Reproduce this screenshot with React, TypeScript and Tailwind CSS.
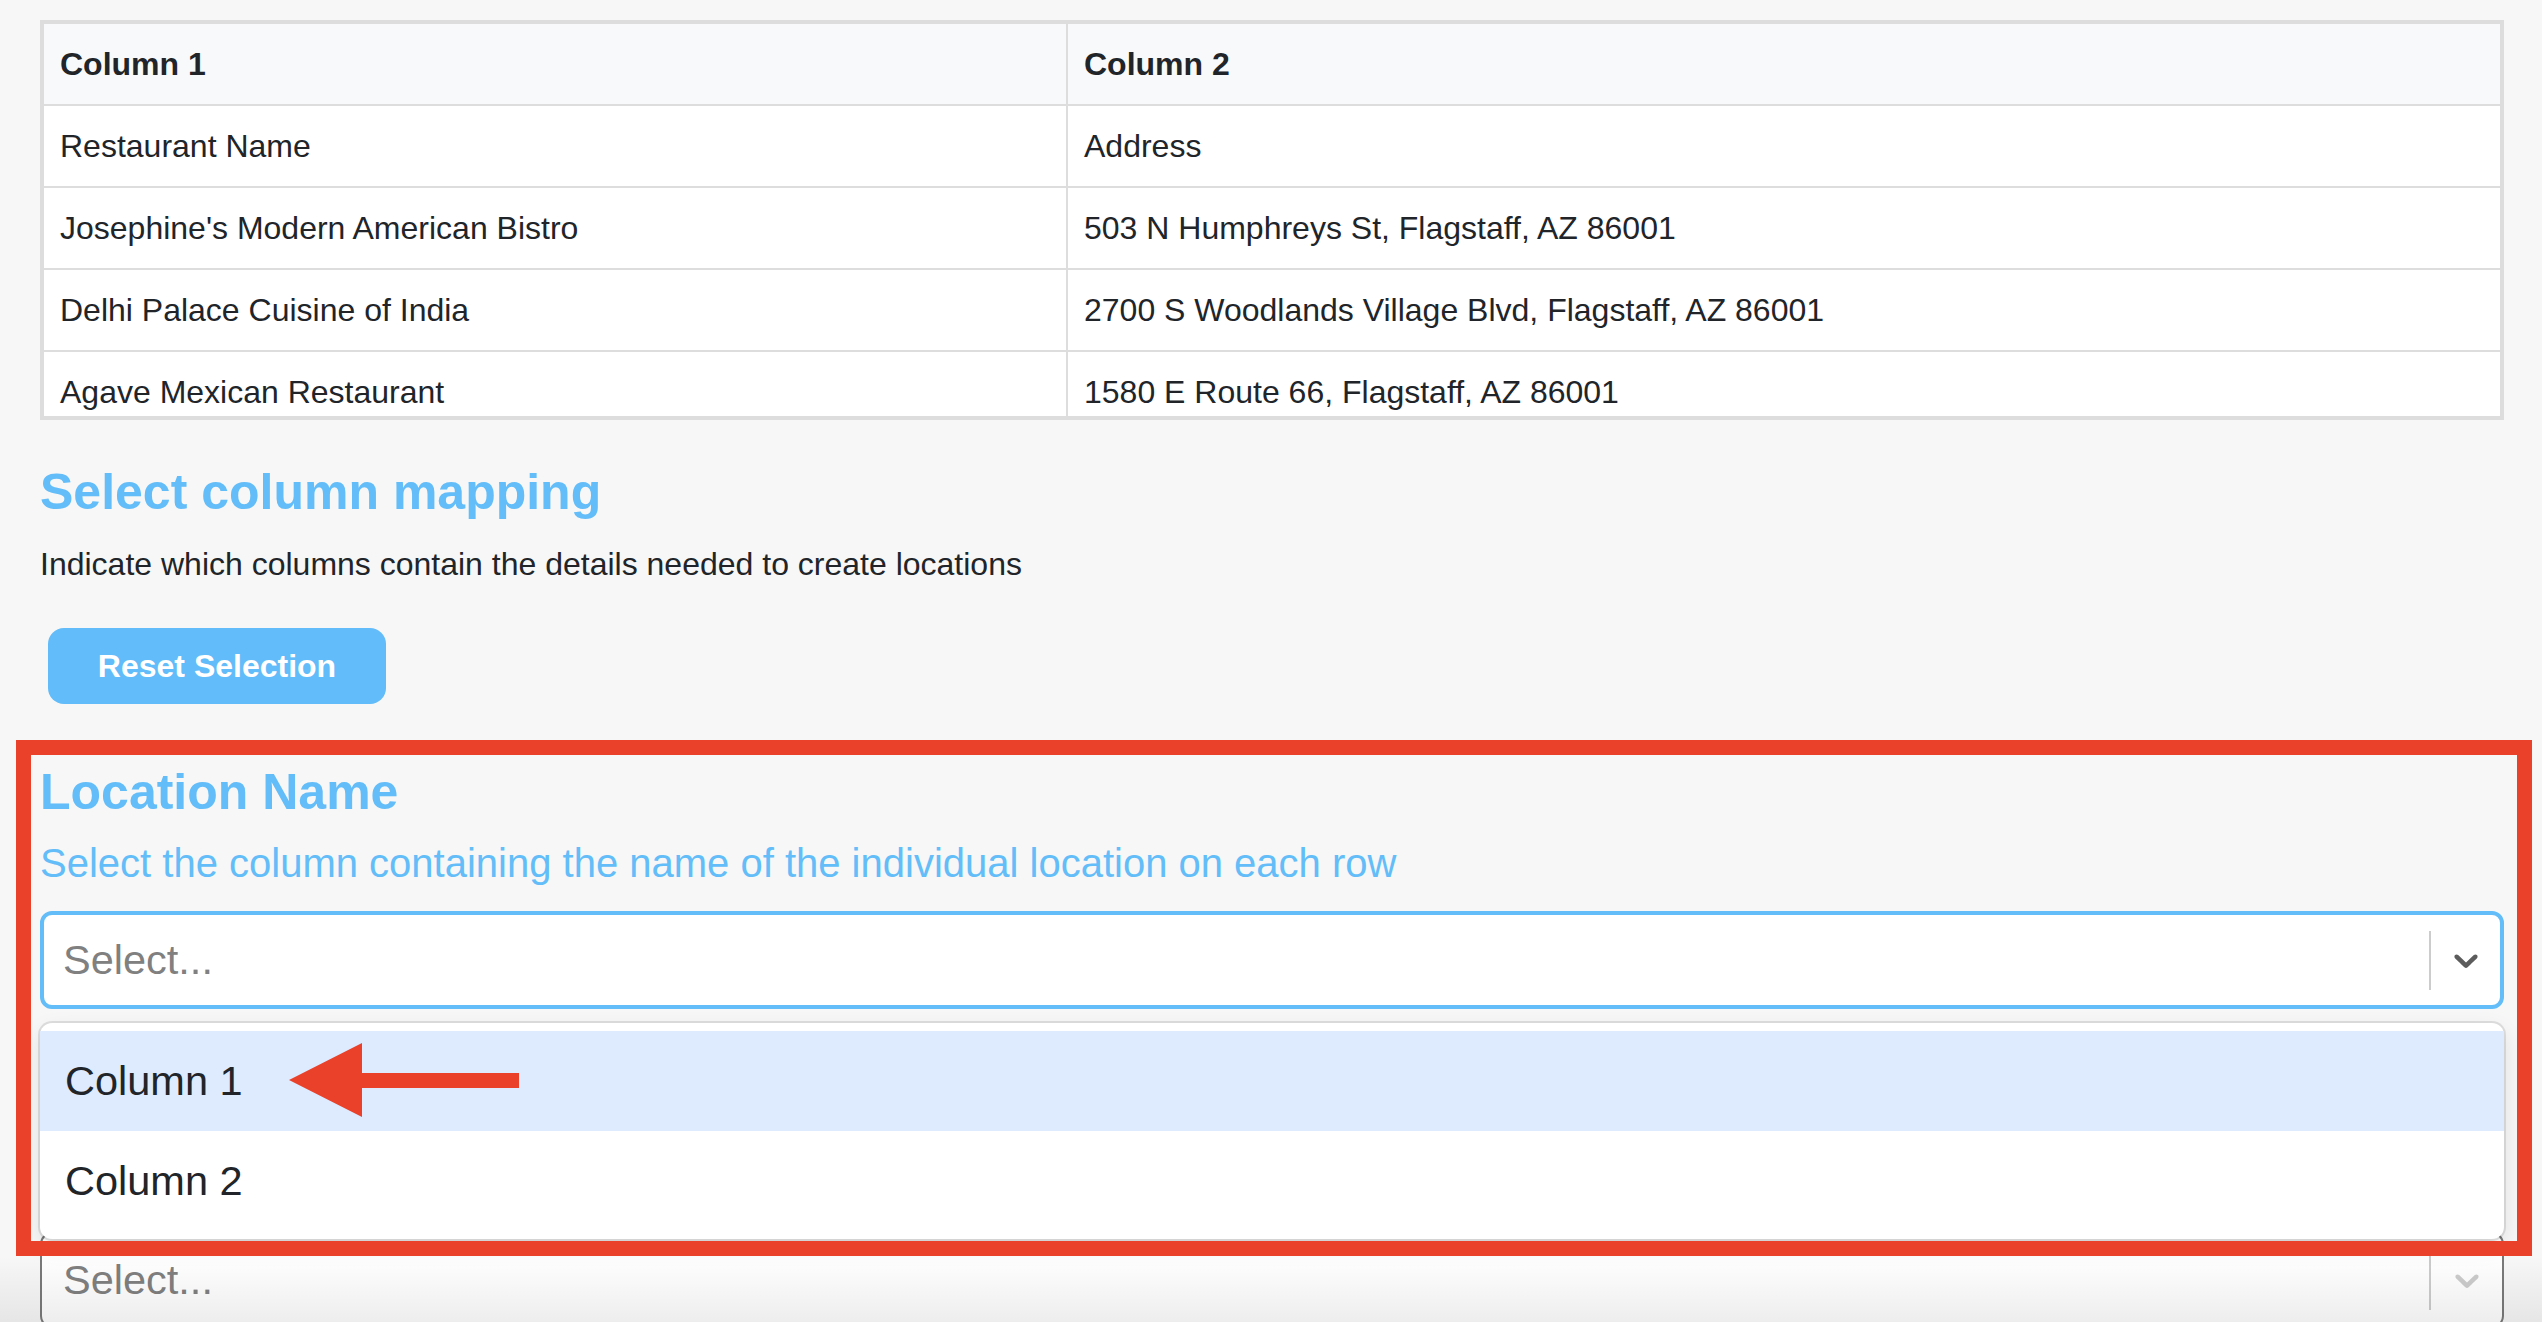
import React from "react";

const rows: [string, string][] = [
  ["Restaurant Name", "Address"],
  ["Josephine's Modern American Bistro", "503 N Humphreys St, Flagstaff, AZ 86001"],
  ["Delhi Palace Cuisine of India", "2700 S Woodlands Village Blvd, Flagstaff, AZ 86001"],
  ["Agave Mexican Restaurant", "1580 E Route 66, Flagstaff, AZ 86001"],
];

function Chevron({ color }: { color: string }) {
  return (
    <svg width="40" height="40" viewBox="0 0 20 20" fill={color} aria-hidden="true">
      <path d="M4.516 7.548c0.436-0.446 1.043-0.481 1.576 0l3.908 3.747 3.908-3.747c0.533-0.481 1.141-0.446 1.574 0 0.436 0.445 0.408 1.197 0 1.615-0.406 0.418-4.695 4.502-4.695 4.502-0.217 0.223-0.502 0.335-0.787 0.335s-0.57-0.112-0.789-0.335c0 0-4.287-4.084-4.695-4.502s-0.436-1.17 0-1.615z" />
    </svg>
  );
}

export default function App() {
  return (
    <div className="relative h-[1322px] overflow-hidden bg-[#f7f7f7] pl-[40px] pr-[38px] pt-[20px] font-['Liberation_Sans',Arial,sans-serif]">
      {/* Preview table */}
      <div className="h-[400px] overflow-hidden border-4 border-[#dddddd] bg-white text-[32px] leading-[48px] text-[#212529]">
        <div className="flex border-b-2 border-[#dddddd] bg-[#f8f9fa] font-bold">
          <div className="w-[1024px] border-r-2 border-[#dddddd] px-4 py-4">Column 1</div>
          <div className="flex-1 px-4 py-4">Column 2</div>
        </div>
        {rows.map(([a, b]) => (
          <div key={a} className="flex border-b-2 border-[#dddddd]">
            <div className="w-[1024px] border-r-2 border-[#dddddd] px-4 py-4">{a}</div>
            <div className="flex-1 px-4 py-4">{b}</div>
          </div>
        ))}
      </div>

      <h2 className="mt-[42px] text-[50px] font-bold leading-[60px] text-[#63bdf8]">Select column mapping</h2>
      <p className="mt-[18px] text-[32px] leading-[48px] text-[#212529]">
        Indicate which columns contain the details needed to create locations
      </p>
      <button className="ml-[8px] mt-[40px] h-[76px] w-[338px] rounded-[16px] bg-[#61bcf9] text-[32px] font-bold text-white">
        Reset Selection
      </button>

      {/* Location Name section */}
      <h3 className="mt-[58px] text-[50px] font-bold leading-[60px] text-[#63bdf8]">Location Name</h3>
      <p className="mt-[17px] text-[40px] leading-[48px] text-[#63bdf8]">
        Select the column containing the name of the individual location on each row
      </p>
      <div className="relative mt-[24px]">
        <div className="flex h-[98px] items-center rounded-[12px] border-4 border-[#62bdf8] bg-white">
          <div className="flex-1 pl-[19px] text-[41.5px] text-[#808080]">Select...</div>
          <div className="h-[59px] w-[2px] bg-[#cccccc]" />
          <div className="flex w-[69px] items-center justify-center">
            <Chevron color="#5c5c5c" />
          </div>
        </div>
        {/* open menu */}
        <div className="absolute left-0 right-0 top-[112px] z-10 rounded-[12px] bg-white py-[8px] text-[41.5px] text-[#212529] shadow-[0_0_0_2px_rgba(0,0,0,0.1),0_8px_22px_rgba(0,0,0,0.1)]">
          <div className="flex h-[100px] items-center bg-[#deebff] px-[25px]">Column 1</div>
          <div className="flex h-[100px] items-center px-[25px]">Column 2</div>
        </div>
      </div>

      {/* Next field (covered by the menu) */}
      <div className="mt-[223px] flex h-[96px] items-center rounded-[12px] border-2 border-[#7a7a7a] bg-white">
        <div className="flex-1 pl-[21px] text-[41.5px] text-[#808080]">Select...</div>
        <div className="h-[59px] w-[2px] bg-[#cccccc]" />
        <div className="flex w-[71px] items-center justify-center">
          <Chevron color="#cccccc" />
        </div>
      </div>

      {/* bottom fade */}
      <div className="pointer-events-none absolute bottom-0 left-0 right-0 top-[1256px] bg-linear-to-b from-black/0 to-black/[0.07]" />

      {/* annotation: red box */}
      <div className="pointer-events-none absolute left-[16px] top-[740px] z-20 h-[516px] w-[2516px] border-[15px] border-[#e9412a]" />
      {/* annotation: arrow */}
      <svg
        className="pointer-events-none absolute left-[289px] top-[1043px] z-20"
        width="230"
        height="75"
        viewBox="0 0 230 75"
        aria-hidden="true"
      >
        <polygon points="0,37 73,0 73,30 230,30 230,45 73,45 73,74" fill="#e9412a" />
      </svg>
    </div>
  );
}
